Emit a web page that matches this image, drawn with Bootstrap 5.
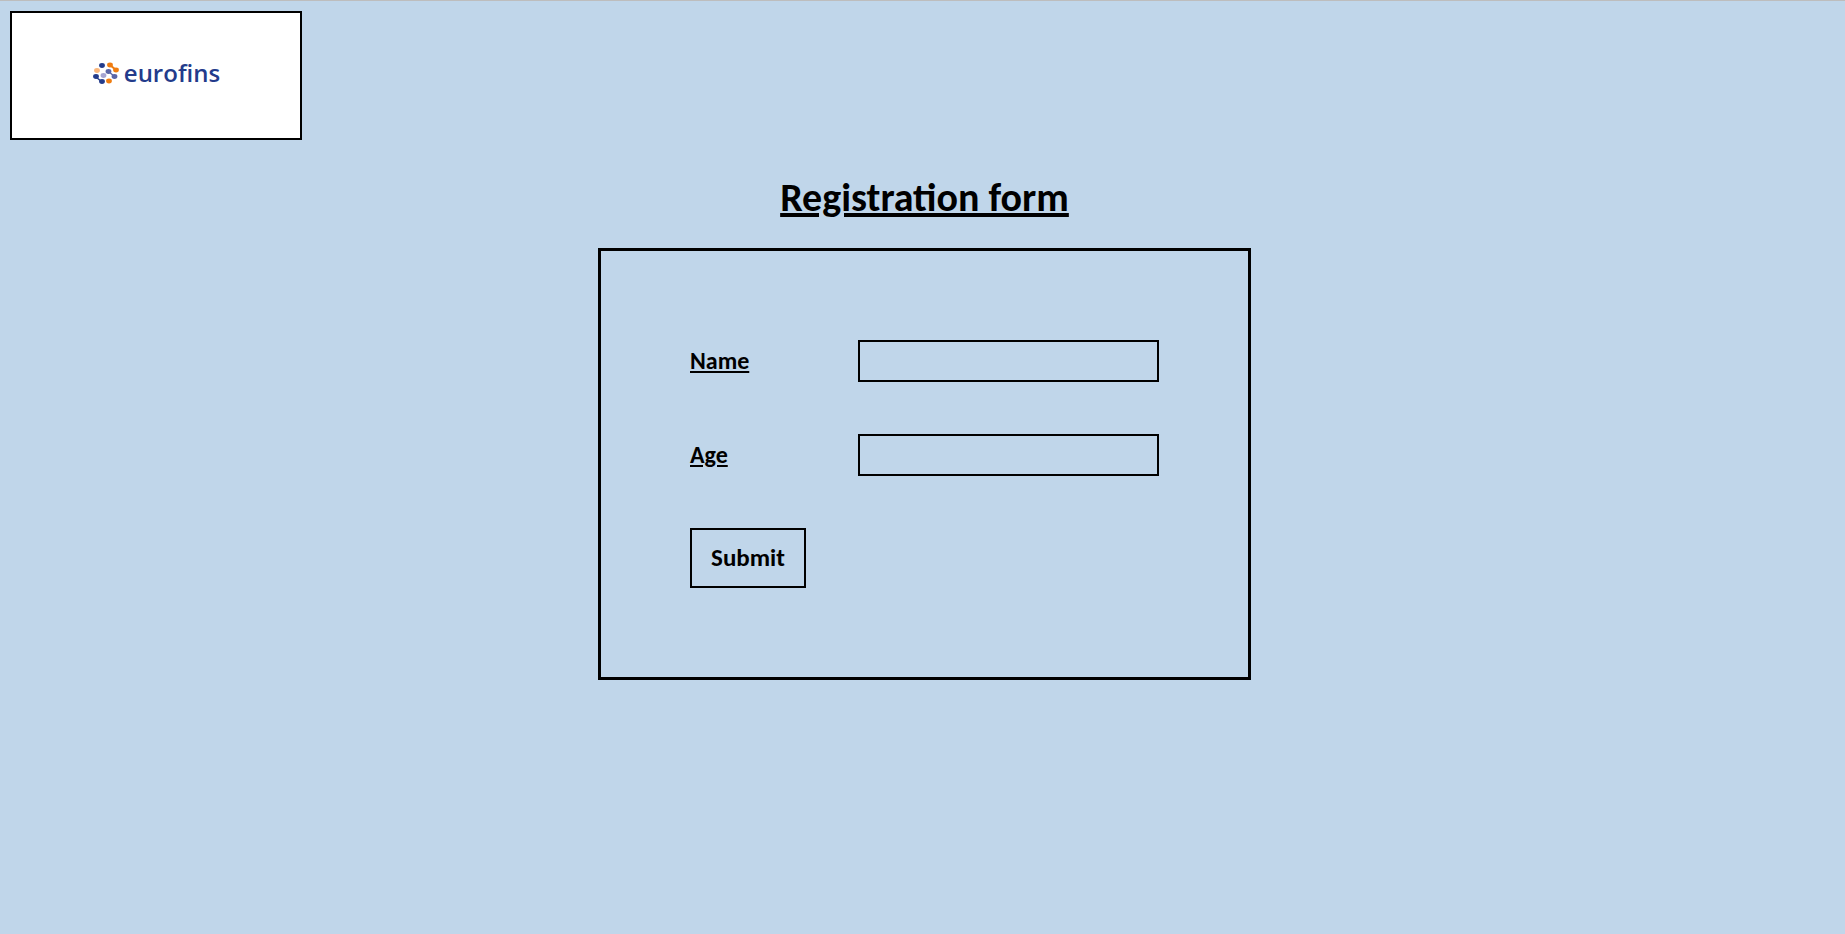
<!DOCTYPE html>
<html lang="en">
<head>
<meta charset="utf-8">
<meta name="viewport" content="width=device-width, initial-scale=1">
<title>Registration form</title>
<link rel="stylesheet" href="https://cdn.jsdelivr.net/npm/bootstrap@5.3.0/dist/css/bootstrap.min.css">
<style>
body { background: #c0d6ea; color: #000; font-family: Calibri, Carlito, Lato, sans-serif; border-top: 1px solid #bdbdbd; min-height: 100vh; padding: 10px 6px 10px 10px; }
.brand-box { width: 292px; height: 129px; background: #fff; border: 2px solid #000; padding-bottom: 6px; }
.brand-name { font-family: "Open Sans", sans-serif; font-size: 24px; line-height: 28px; font-weight: 600; font-variant-ligatures: none; color: #233b8b; }
.form-title { font-size: 40px; line-height: 44px; font-weight: 700; margin: 36px 0 28px; text-decoration-thickness: 4px; text-underline-offset: 2px; }
.form-box { width: 653px; max-width: 100%; border: 3px solid #000; padding: 89px; gap: 52px; }
.field-label { width: 168px; font-size: 24px; line-height: 28px; font-weight: 700; text-decoration-thickness: 2px; text-underline-offset: 2px; }
.field-input, .field-input:focus { background: transparent; color: #000; border: 2px solid #000; border-radius: 0; height: 42px; font-size: 20px; min-width: 0; }
.send-btn { --bs-btn-border-width: 2px; --bs-btn-border-color: #000; --bs-btn-border-radius: 0; --bs-btn-color: #000; --bs-btn-hover-border-color: #000; width: 116px; height: 60px; padding: 0; font-size: 25px; line-height: 28px; font-weight: 700; }
</style>
</head>
<body>
<header class="brand-box d-flex align-items-center justify-content-center">
  <a href="#" class="d-flex align-items-center text-decoration-none" aria-label="eurofins">
    <svg class="me-1" width="28" height="24" viewBox="0 0 28 24" aria-hidden="true">
      <path d="M4 16l6 5" stroke="#233b8b" stroke-width="1.500"/>
      <path d="M18 4l6 5" stroke="#f07d10" stroke-width="2"/>
      <path d="M16.500 10.500l6 5" stroke="#5b66a8" stroke-width="1.500"/>
      <g fill="#233b8b"><ellipse cx="10" cy="4.500" rx="2.900" ry="2.400"/><ellipse cx="4" cy="15.500" rx="2.900" ry="2.400"/><ellipse cx="10" cy="20.500" rx="2.900" ry="2.400"/></g>
      <g fill="#f07d10"><ellipse cx="18" cy="4" rx="2.900" ry="2.400"/><ellipse cx="24" cy="9" rx="2.900" ry="2.400"/><ellipse cx="17" cy="20" rx="2.900" ry="2.400"/></g>
      <g fill="#5b66a8"><ellipse cx="16.500" cy="10.500" rx="2.900" ry="2.400"/><ellipse cx="22.500" cy="15.500" rx="2.900" ry="2.400"/></g>
      <ellipse cx="5" cy="9.500" rx="2.900" ry="2.400" fill="#fbb77c"/>
      <ellipse cx="11.500" cy="14.500" rx="2.900" ry="2.400" fill="#a5a5d2"/>
    </svg>
    <span class="brand-name">eurofins</span>
  </a>
</header>
<main>
  <h1 class="form-title text-center text-decoration-underline">Registration form</h1>
  <form class="form-box d-flex flex-column mx-auto">
    <div class="d-flex align-items-center">
      <label class="field-label flex-shrink-0 text-decoration-underline" for="name">Name</label>
      <input class="field-input form-control" type="text" id="name" name="name">
    </div>
    <div class="d-flex align-items-center">
      <label class="field-label flex-shrink-0 text-decoration-underline" for="age">Age</label>
      <input class="field-input form-control" type="text" id="age" name="age">
    </div>
    <button class="btn send-btn align-self-start" type="submit">Submit</button>
  </form>
</main>
<script src="https://cdn.jsdelivr.net/npm/bootstrap@5.3.0/dist/js/bootstrap.bundle.min.js"></script>
</body>
</html>
